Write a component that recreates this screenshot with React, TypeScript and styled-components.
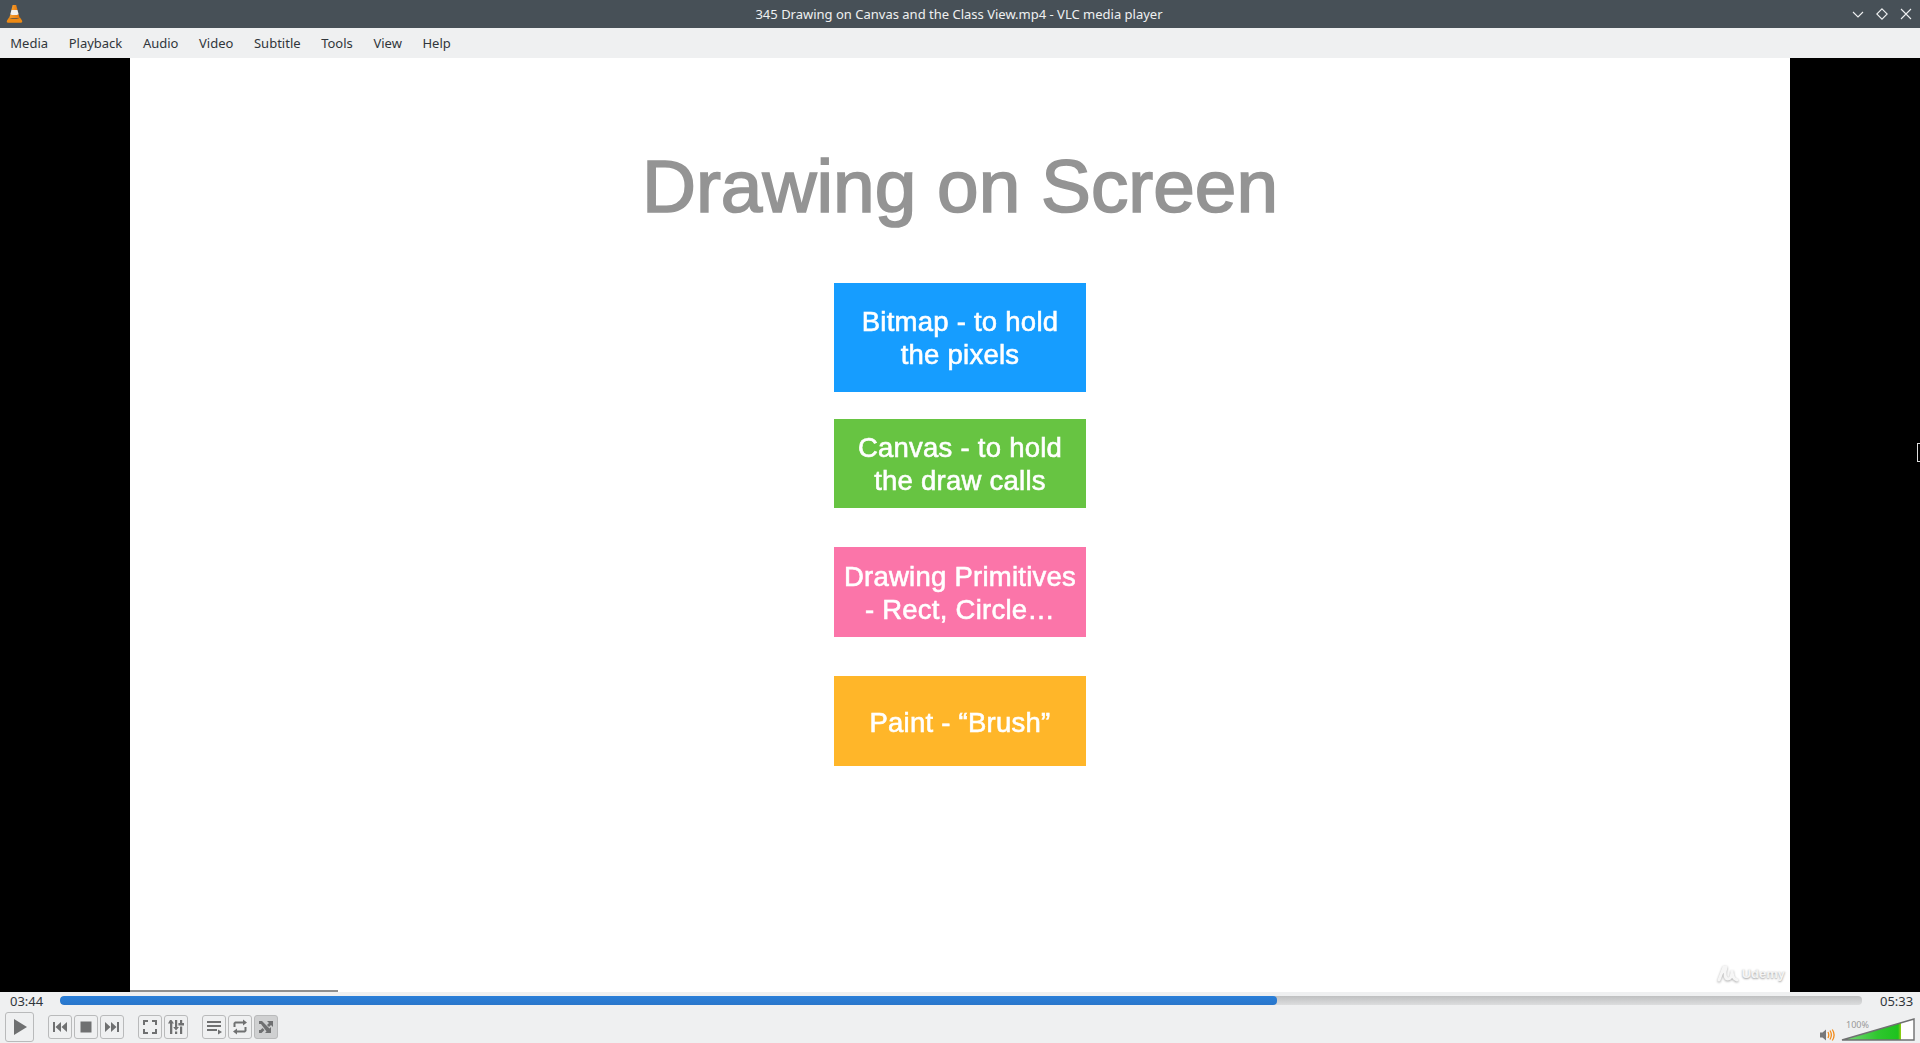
import React from "react";
import styled, { createGlobalStyle } from "styled-components";

const Global = createGlobalStyle`
  html, body { margin: 0; padding: 0; height: 100%; overflow: hidden; background: #eff0f1; }
  #root { height: 100%; }
`;

const Window = styled.div`
  width: 1920px;
  height: 1043px;
  display: flex;
  flex-direction: column;
  font-family: "Noto Sans", sans-serif;
  font-size: 13px;
  color: #31363b;
  background: #eff0f1;
  overflow: hidden;
`;

const TitleBar = styled.header`
  height: 28px;
  flex: none;
  background: #475057;
  display: grid;
  grid-template-columns: 1fr auto 1fr;
  align-items: center;
  padding: 0 8px 0 6px;
  box-sizing: border-box;
`;
const TitleText = styled.div`
  color: #eff0f1;
  font-size: 13px;
  line-height: 28px;
`;
const WindowButtons = styled.div`
  display: flex;
  justify-content: flex-end;
  align-items: center;
  gap: 12px;
`;

const MenuBar = styled.nav`
  height: 30px;
  flex: none;
  display: flex;
  align-items: center;
`;
const MenuItem = styled.span`
  padding: 0 10.3px;
  line-height: 30px;
`;

const Video = styled.main`
  height: 934px;
  flex: none;
  background: #000;
  display: flex;
  justify-content: center;
  position: relative;
`;
const Slide = styled.section`
  width: 1660px;
  background: #fff;
  display: flex;
  flex-direction: column;
  align-items: center;
  position: relative;
  font-family: "Liberation Sans", Arial, sans-serif;
`;
const SlideTitle = styled.h1`
  margin: 90px 0 0;
  height: 135px;
  font-size: 74.8px;
  line-height: 76px;
  font-weight: 400;
  -webkit-text-stroke: 1.7px #949494;
  color: #949494;
  filter: blur(0.5px);
`;
const Box = styled.div<{ $bg: string; $h: number; $mt: number; $nudge?: boolean }>`
  width: 252px;
  height: ${(p) => p.$h}px;
  margin-top: ${(p) => p.$mt}px;
  padding-top: ${(p) => (p.$nudge ? 2 : 0)}px;
  box-sizing: border-box;
  flex: none;
  background: ${(p) => p.$bg};
  color: #fff;
  display: flex;
  align-items: center;
  justify-content: center;
  text-align: center;
  font-size: 27.5px;
  line-height: 33px;
  -webkit-text-stroke: 0.6px #fff;
  letter-spacing: 0.25px;
`;
const BoxText = styled.span`
  filter: blur(0.4px);
`;
const ProgressLine = styled.div`
  margin-top: auto;
  align-self: flex-start;
  width: 208px;
  height: 2px;
  background: #8f8f8f;
`;
const Watermark = styled.div`
  position: absolute;
  right: 5px;
  bottom: 9px;
  display: flex;
  align-items: center;
  gap: 3px;
  color: #f4f4f4;
  font-size: 13px;
  font-weight: 700;
  text-shadow: 0 1px 2px #9a9a9a;
`;
const WatermarkLogo = styled.svg`
  filter: drop-shadow(0 1px 1px #aaa);
`;
const CursorMark = styled.div`
  position: absolute;
  right: 0;
  top: 385px;
  width: 2px;
  height: 17px;
  border: 1px solid #ddd;
  border-right: none;
`;

const Controls = styled.footer`
  flex: 1;
  display: flex;
  flex-direction: column;
`;
const SeekRow = styled.div`
  height: 19px;
  display: flex;
  align-items: center;
  padding-bottom: 2px;
  box-sizing: border-box;
`;
const Time = styled.span<{ $left?: boolean }>`
  width: ${(p) => (p.$left ? 60 : 58)}px;
  flex: none;
  padding-left: ${(p) => (p.$left ? 10 : 18)}px;
  box-sizing: border-box;
  line-height: 18px;
  white-space: nowrap;
`;
const SeekTrack = styled.div`
  flex: 1;
  height: 9px;
  border-radius: 4px;
  background: linear-gradient(#bfc0c1, #dcddde);
  overflow: hidden;
`;
const SeekFill = styled.div`
  height: 100%;
  border-radius: 4px;
  background: linear-gradient(#2a7fd8, #2976cb);
`;
const ButtonRow = styled.div`
  height: 32px;
  display: flex;
  align-items: center;
  padding-left: 5px;
`;
const Group = styled.div<{ $ml: number }>`
  display: flex;
  gap: 2px;
  margin-left: ${(p) => p.$ml}px;
`;
const Btn = styled.button<{ $active?: boolean; $big?: boolean }>`
  width: ${(p) => (p.$big ? 29 : 24)}px;
  height: ${(p) => (p.$big ? 30 : 24)}px;
  padding: 0;
  box-sizing: border-box;
  border: 1px solid #b9babb;
  border-radius: 3px;
  background: ${(p) => (p.$active ? "#cfd0d1" : "#eff0f1")};
  display: flex;
  align-items: center;
  justify-content: center;
`;
const Volume = styled.div`
  margin-left: auto;
  align-self: stretch;
  display: flex;
  align-items: flex-end;
  padding: 0 5px 2px 0;
  gap: 6px;
  position: relative;
`;
const VolumeLabel = styled.span`
  position: absolute;
  left: 26px;
  top: 9px;
  font-size: 9px;
  line-height: 10px;
  color: #999;
`;

const I = "#6f7071";

const Cone = () => (
  <svg width="17" height="18" viewBox="0 0 17 18">
    <defs>
      <linearGradient id="cone" x1="0" x2="1" y1="0" y2="0">
        <stop offset="0" stopColor="#f7a030" />
        <stop offset="1" stopColor="#e87a0c" />
      </linearGradient>
    </defs>
    <path d="M6.600 0h3.600l1.300 5H5.400z" fill="url(#cone)" />
    <path d="M5.400 5h6.100l1.200 4.500c-1.200.8-7.300.8-8.500 0z" fill="#f4f2ee" />
    <path d="M4.200 9.500c1.500.8 7 .8 8.500 0l1 3.500H3.200z" fill="url(#cone)" />
    <path d="M3 12.500 1 15.500C.4 17 1 17.700 2 17.700h13c1 0 1.600-.7 1-2.200l-2-3c-1 1.700-10 1.700-11 0z" fill="#ee8a14" />
  </svg>
);

const Glyph = ({ children }: { children: React.ReactNode }) => (
  <svg width="12" height="12" viewBox="0 0 12 12" fill="none" stroke="#eff0f1" strokeWidth="1.100">
    {children}
  </svg>
);

const Icon = ({ children }: { children: React.ReactNode }) => (
  <svg width="16" height="16" viewBox="0 0 16 16" fill={I} stroke="none">
    {children}
  </svg>
);

export default function App() {
  return (
    <Window>
      <Global />
      <TitleBar>
        <Cone />
        <TitleText>345 Drawing on Canvas and the Class View.mp4 - VLC media player</TitleText>
        <WindowButtons>
          <Glyph>
            <path d="M1 4l5 5 5-5" />
          </Glyph>
          <Glyph>
            <path d="M6 .8 11.200 6 6 11.200.8 6z" />
          </Glyph>
          <Glyph>
            <path d="M1 1l10 10M11 1 1 11" />
          </Glyph>
        </WindowButtons>
      </TitleBar>
      <MenuBar>
        {["Media", "Playback", "Audio", "Video", "Subtitle", "Tools", "View", "Help"].map((m) => (
          <MenuItem key={m}>{m}</MenuItem>
        ))}
      </MenuBar>
      <Video>
        <Slide>
          <SlideTitle>Drawing on Screen</SlideTitle>
          <Box $bg="#169dff" $h={109} $mt={0}>
            <BoxText>
              Bitmap - to hold
              <br />
              the pixels
            </BoxText>
          </Box>
          <Box $bg="#67c442" $h={89} $mt={27}>
            <BoxText>
              Canvas - to hold
              <br />
              the draw calls
            </BoxText>
          </Box>
          <Box $bg="#fb75a9" $h={90} $mt={39} $nudge>
            <BoxText>
              Drawing Primitives
              <br />- Rect, Circle…
            </BoxText>
          </Box>
          <Box $bg="#ffb629" $h={90} $mt={39} $nudge>
            <BoxText>Paint - “Brush”</BoxText>
          </Box>
          <ProgressLine />
          <Watermark>
            <WatermarkLogo width="22" height="19" viewBox="0 0 22 19" fill="none" stroke="#f6f6f6" strokeWidth="3" strokeLinecap="round">
              <path d="M2 16 7 3M9 3c-2 7-1 12 2 12s4-5 4-9c0 5 1 9 5 10" />
            </WatermarkLogo>
            Udemy
          </Watermark>
        </Slide>
        <CursorMark />
      </Video>
      <Controls>
        <SeekRow>
          <Time $left>03:44</Time>
          <SeekTrack>
            <SeekFill style={{ width: `${((1277 - 60) / 1802) * 100}%` }} />
          </SeekTrack>
          <Time>05:33</Time>
        </SeekRow>
        <ButtonRow>
          <Btn $big aria-label="Play">
            <svg width="16" height="18" viewBox="0 0 16 18" fill={I}>
              <path d="M2 1l13 8-13 8z" />
            </svg>
          </Btn>
          <Group $ml={14}>
            <Btn aria-label="Previous">
              <Icon>
                <path d="M1 3h2v10H1zM9 3v10L3.500 8zM15 3v10L9.500 8z" />
              </Icon>
            </Btn>
            <Btn aria-label="Stop">
              <Icon>
                <path d="M2.500 2.500h11v11h-11z" />
              </Icon>
            </Btn>
            <Btn aria-label="Next">
              <Icon>
                <path d="M15 3h-2v10h2zM7 3v10l5.500-5zM1 3v10l5.500-5z" />
              </Icon>
            </Btn>
          </Group>
          <Group $ml={14}>
            <Btn aria-label="Fullscreen">
              <Icon>
                <path d="M1 1h5v2H3v3H1zM10 1h5v5h-2V3h-3zM1 10h2v3h3v2H1zM13 10h2v5h-5v-2h3z" />
              </Icon>
            </Btn>
            <Btn aria-label="Extended settings">
              <Icon>
                <path d="M2 1h1.500L6 4.500H4.300V15H2V4.500H0zM7 1h2.200v7H11L8 11.500 5.200 8H7zM7 12.500h2.200V15H7zM12 1h2.200v3H16v2.500h-5.600V4H12zM12 7.500h2.200V15H12z" />
              </Icon>
            </Btn>
          </Group>
          <Group $ml={14}>
            <Btn aria-label="Playlist">
              <Icon>
                <path d="M1 2h14v2H1zM1 6h14v2H1zM1 10h10v2H1zM12 10.500l4 2.500-4 2.500z" />
              </Icon>
            </Btn>
            <Btn aria-label="Loop">
              <Icon>
                <path d="M3 2.500h8V.5l4 3-4 3v-2H3.500V8H1.500V4zM12.500 8h2v4l-1.500 1.500H5v2l-4-3 4-3v2h7.500z" />
              </Icon>
            </Btn>
            <Btn $active aria-label="Random">
              <Icon>
                <path d="M1 2h3l7.500 7.500L13 8v6H7l1.500-1.500L3 5H1zM9 2h6v6l-2-2-2 2-2-2 2-2zM1 11h1.500l2-2 2 2L3.500 14H1z" />
              </Icon>
            </Btn>
          </Group>
          <Volume>
            <svg width="15" height="12" viewBox="0 0 15 12">
              <path d="M0 3.500h2.500L6 .5v11L2.500 8.500H0z" fill="#77787a" />
              <path d="M8 3c1 2 1 4 0 6M10 1.500c1.800 3 1.800 6 0 9M12.300 .5c2.300 3.500 2.300 7.500 0 11" fill="none" stroke="#f28c1c" strokeWidth="1.300" />
            </svg>
            <svg width="74" height="23" viewBox="0 0 74 23">
              <defs>
                <linearGradient id="vol" x1="0" x2="1" y1="0" y2="0">
                  <stop offset="0" stopColor="#7ed87e" />
                  <stop offset="0.6" stopColor="#2fc72f" />
                  <stop offset="0.95" stopColor="#1ec21e" />
                  <stop offset="1" stopColor="#9ccf10" />
                </linearGradient>
              </defs>
              <path d="M1 22 73 1v21z" fill="#fff" />
              <path d="M1 22 60 4.800V22z" fill="url(#vol)" />
              <path d="M1 22 73 1v21z" fill="none" stroke="#6f7071" strokeWidth="1.400" />
            </svg>
            <VolumeLabel>100%</VolumeLabel>
          </Volume>
        </ButtonRow>
      </Controls>
    </Window>
  );
}
